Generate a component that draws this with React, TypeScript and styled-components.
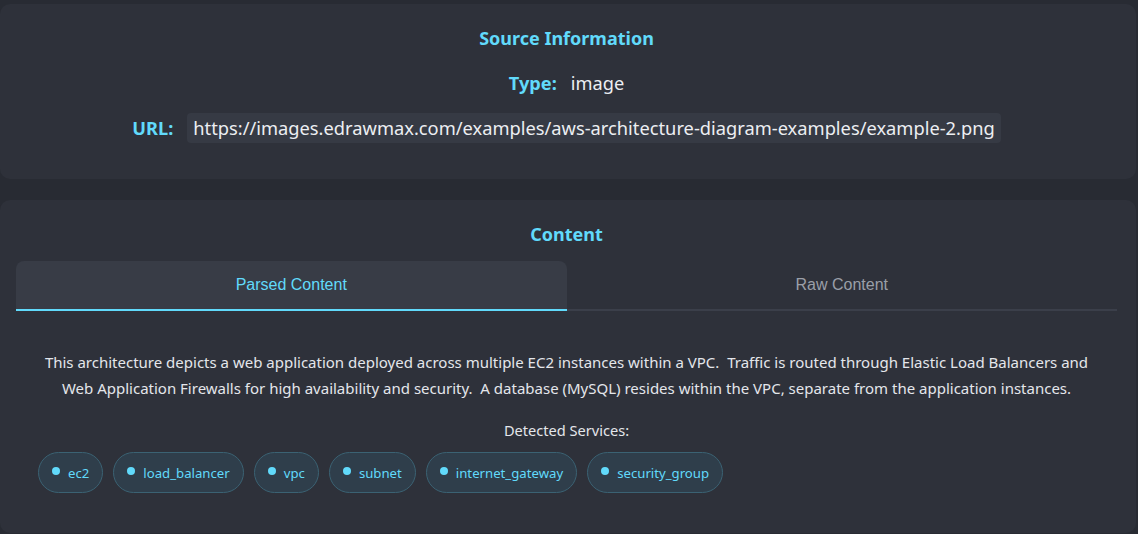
import React, { useState } from "react";
import styled, { createGlobalStyle } from "styled-components";

const GlobalStyle = createGlobalStyle`
  html, body {
    margin: 0;
    padding: 0;
    background: #282b33;
  }
  body {
    font-family: "Noto Sans", "Open Sans", sans-serif;
    color: #e4e6eb;
  }
`;

const Page = styled.div`
  display: flex;
  flex-direction: column;
  gap: 21px;
  padding: 4px 2px 0 0;
  min-height: 534px;
  box-sizing: border-box;
`;

const Card = styled.section<{ $pb?: number }>`
  background: #2e313a;
  border-radius: 10px;
  padding: 20px 19px ${(p) => p.$pb ?? 36}px 16px;
  display: flex;
  flex-direction: column;
  align-items: stretch;
`;

const Title = styled.h3`
  margin: 0;
  font-size: 18px;
  line-height: 28px;
  font-weight: 700;
  color: #61dafb;
  text-align: center;
`;

const InfoList = styled.div`
  display: flex;
  flex-direction: column;
  align-items: center;
  gap: 15px;
  margin-top: 16px;
`;

const InfoRow = styled.div`
  display: flex;
  align-items: center;
  gap: 14px;
  height: 30px;
`;

const Label = styled.span`
  font-size: 18.2px;
  font-weight: 700;
  color: #61dafb;
`;

const Value = styled.span`
  font-size: 18.2px;
  color: #eceef2;
`;

const Code = styled.code`
  font-family: "Noto Sans", "Open Sans", sans-serif;
  font-size: 18.3px;
  color: #eceef2;
  background: #363a44;
  border-radius: 4px;
  padding: 0 6px;
  line-height: 30px;
`;

const TabList = styled.div`
  display: flex;
  margin-top: 13px;
  border-bottom: 2px solid #3b3f4a;
`;

const Tab = styled.button<{ $active: boolean }>`
  flex: 1;
  height: 50px;
  border: none;
  border-bottom: 2px solid ${(p) => (p.$active ? "#61dafb" : "transparent")};
  margin-bottom: -2px;
  border-radius: 8px 8px 0 0;
  background: ${(p) => (p.$active ? "#383c46" : "transparent")};
  color: ${(p) => (p.$active ? "#61dafb" : "#9a9fa8")};
  font-family: "Liberation Sans", Arial, sans-serif;
  font-size: 16px;
  cursor: pointer;
  padding: 0;
`;

const Panel = styled.div`
  padding: 38px 22px 0;
  display: flex;
  flex-direction: column;
  align-items: stretch;
`;

const Paragraph = styled.p`
  margin: 0;
  font-size: 15px;
  line-height: 26px;
  text-align: center;
  color: #e4e6eb;
`;

const SubTitle = styled.div`
  margin-top: 18px;
  font-size: 14.6px;
  line-height: 22px;
  text-align: center;
  color: #e4e6eb;
`;

const Chips = styled.div`
  display: flex;
  flex-wrap: wrap;
  gap: 10px;
  margin-top: 11px;
`;

const Chip = styled.span`
  display: inline-flex;
  align-items: center;
  gap: 8px;
  height: 41px;
  box-sizing: border-box;
  padding: 0 13px;
  border-radius: 21px;
  background: #2f3e4b;
  border: 1px solid #3b6273;
  color: #61dafb;
  font-size: 13.2px;
`;

const Dot = styled.span`
  width: 8px;
  height: 8px;
  border-radius: 50%;
  background: #61dafb;
  margin-top: -3px;
`;

const services = [
  "ec2",
  "load_balancer",
  "vpc",
  "subnet",
  "internet_gateway",
  "security_group",
];

export default function App() {
  const [tab, setTab] = useState<"parsed" | "raw">("parsed");
  return (
    <>
      <GlobalStyle />
      <Page>
        <Card>
          <Title>Source Information</Title>
          <InfoList>
            <InfoRow>
              <Label>Type:</Label>
              <Value>image</Value>
            </InfoRow>
            <InfoRow>
              <Label>URL:</Label>
              <Code>
                https://images.edrawmax.com/examples/aws-architecture-diagram-examples/example-2.png
              </Code>
            </InfoRow>
          </InfoList>
        </Card>
        <Card $pb={40}>
          <Title>Content</Title>
          <TabList>
            <Tab $active={tab === "parsed"} onClick={() => setTab("parsed")}>
              Parsed Content
            </Tab>
            <Tab $active={tab === "raw"} onClick={() => setTab("raw")}>
              Raw Content
            </Tab>
          </TabList>
          <Panel>
            <Paragraph>
              This architecture depicts a web application deployed across multiple EC2
              instances within a VPC.&nbsp; Traffic is routed through Elastic Load
              Balancers and Web Application Firewalls for high availability and
              security.&nbsp; A database (MySQL) resides within the VPC, separate from
              the application instances.
            </Paragraph>
            <SubTitle>Detected Services:</SubTitle>
            <Chips>
              {services.map((s) => (
                <Chip key={s}>
                  <Dot />
                  {s}
                </Chip>
              ))}
            </Chips>
          </Panel>
        </Card>
      </Page>
    </>
  );
}
